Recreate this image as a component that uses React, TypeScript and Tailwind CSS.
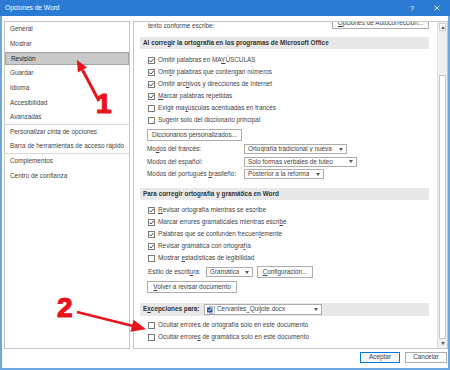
import React from "react";

const Check = ({ on }: { on?: boolean }) => (
  <span className="flex h-[7px] w-[7px] shrink-0 items-center justify-center border border-[#7a7a7a] bg-white">
    {on && (
      <svg width="5" height="5" viewBox="0 0 5 5">
        <path d="M0.4 2.5 L1.9 4 L4.6 0.9" fill="none" stroke="#333" strokeWidth="0.9" />
      </svg>
    )}
  </span>
);

const CheckRow = ({ on, children }: { on?: boolean; children: React.ReactNode }) => (
  <div className="flex h-[12px] items-center gap-[3px] pl-[14px]">
    <Check on={on} />
    <span className="whitespace-nowrap">{children}</span>
  </div>
);

const Caret = () => (
  <svg width="4" height="3" viewBox="0 0 4 3" className="shrink-0">
    <path d="M0 0H4L2 3Z" fill="#555" />
  </svg>
);

const Drop = ({ className, children }: { className: string; children: React.ReactNode }) => (
  <div className={`flex h-[10px] items-center justify-between border border-[#acacac] bg-white px-[3px] ${className}`}>
    <span className="truncate">{children}</span>
    <Caret />
  </div>
);

const Btn = ({ className, children }: { className: string; children: React.ReactNode }) => (
  <div className={`flex h-[12px] shrink-0 items-center justify-center border border-[#adadad] bg-[#fdfdfd] whitespace-nowrap ${className}`}>
    {children}
  </div>
);

const Header = ({ className, children }: { className: string; children: React.ReactNode }) => (
  <div className={`ml-[6px] mr-[8px] flex items-center bg-[#e8e8e8] pl-[3px] font-bold text-[#333] whitespace-nowrap ${className}`}>
    {children}
  </div>
);

const WordIcon = () => (
  <svg width="8" height="8" viewBox="0 0 8 8" className="shrink-0">
    <rect x="2.5" y="0.5" width="5" height="7" fill="#fff" stroke="#7f8fa8" strokeWidth="0.6" />
    <rect x="0" y="1.5" width="5.5" height="5" fill="#2b5797" />
    <path d="M1 3.5 L2.4 5 L4.6 2.4" fill="none" stroke="#fff" strokeWidth="0.9" />
  </svg>
);

const nav: { label: string; sel?: boolean; sep?: boolean }[] = [
  { label: "General" },
  { label: "Mostrar" },
  { label: "Revisión", sel: true },
  { label: "Guardar" },
  { label: "Idioma" },
  { label: "Accesibilidad" },
  { label: "Avanzadas", sep: true },
  { label: "Personalizar cinta de opciones" },
  { label: "Barra de herramientas de acceso rápido", sep: true },
  { label: "Complementos" },
  { label: "Centro de confianza" },
];

export default function App() {
  return (
    <div className="relative flex h-[370px] w-[450px] flex-col overflow-hidden bg-white font-['Liberation_Sans',Arial,sans-serif] text-[6.4px] leading-none text-[#444]">
      {/* title bar */}
      <div className="flex h-[16px] shrink-0 items-center bg-[#2b7bd5] text-white">
        <span className="flex-1 pl-[5px] text-[6.6px]">Opciones de Word</span>
        <span className="flex w-[24px] justify-center text-[7px]">?</span>
        <span className="flex w-[26px] justify-center">
          <svg width="6" height="6" viewBox="0 0 6 6">
            <path d="M0.5 0.5 L5.5 5.5 M5.5 0.5 L0.5 5.5" stroke="#fff" strokeWidth="0.9" />
          </svg>
        </span>
      </div>

      <div className="flex flex-1 flex-col border-x-2 border-b-2 border-[#6ea6e4] pt-[5px]">
        <div className="flex h-[328px] gap-[3px] pl-[2px]">
          {/* sidebar */}
          <div className="flex w-[126px] flex-col border border-[#c6c6c6]">
            {nav.map((n) => (
              <div
                key={n.label}
                className={`flex h-[14.7px] shrink-0 items-center ${n.sep ? "border-b border-[#d9d9d9]" : ""}`}
              >
                <div
                  className={`flex h-[12.5px] w-full items-center pl-[5px] whitespace-nowrap ${
                    n.sel ? "border border-[#a3a3a3] bg-[#c9c9c9] pl-[4px] text-[#222]" : ""
                  }`}
                >
                  {n.label}
                </div>
              </div>
            ))}
          </div>

          {/* main panel, scrolled a little */}
          <div className="flex w-[315px] border border-[#c6c6c6]">
            <div className="flex flex-1 flex-col overflow-hidden">
              <div className="-mt-[14px] flex h-[24px] shrink-0 items-end justify-between pl-[14px] pr-[8px]">
                <div className="flex flex-col">
                  <span className="h-[12px]" />
                  <span className="flex h-[12px] items-center whitespace-nowrap">texto conforme escribe:</span>
                </div>
                <Btn className="mb-[3px] w-[97px]">
                  <span><u>O</u>pciones de Autocorrección...</span>
                </Btn>
              </div>

              <Header className="mt-[5px] h-[12px]">Al corregir la ortografía en los programas de Microsoft Office</Header>
              <div className="mt-[5px] flex flex-col">
                <CheckRow on>Omitir palabras en MA<u>Y</u>ÚSCULAS</CheckRow>
                <CheckRow on>Omi<u>t</u>ir palabras que contengan números</CheckRow>
                <CheckRow on>Omitir arc<u>h</u>ivos y direcciones de Internet</CheckRow>
                <CheckRow on><u>M</u>arcar palabras repetidas</CheckRow>
                <CheckRow>Exigir ma<u>y</u>úsculas acentuadas en francés</CheckRow>
                <CheckRow>Sugerir solo del diccionario principal</CheckRow>
              </div>
              <div className="mt-[3px] pl-[13px]">
                <Btn className="w-[95px]">Diccionarios personalizados...</Btn>
              </div>
              <div className="mt-[2px] flex flex-col pl-[13px]">
                <div className="flex h-[12.5px] items-center">
                  <span className="w-[97px] whitespace-nowrap">Mo<u>d</u>os del francés:</span>
                  <Drop className="w-[103px]">Ortografía tradicional y nueva</Drop>
                </div>
                <div className="flex h-[12.5px] items-center">
                  <span className="w-[97px] whitespace-nowrap">Modos del español:</span>
                  <Drop className="w-[113px]">Solo formas verbales de tuteo</Drop>
                </div>
                <div className="flex h-[12.5px] items-center">
                  <span className="w-[97px] whitespace-nowrap">Modos del portugués <u>b</u>rasileño:</span>
                  <Drop className="w-[80px]">Posterior a la reforma</Drop>
                </div>
              </div>

              <Header className="mt-[7.5px] h-[12px]">Para corregir ortografía y gramática en Word</Header>
              <div className="mt-[4px] flex flex-col">
                <CheckRow on><u>R</u>evisar ortografía mientras se escribe</CheckRow>
                <CheckRow on>Marcar errores gramaticales mientras escri<u>b</u>e</CheckRow>
                <CheckRow on>Palabras que se confunden frecuen<u>t</u>emente</CheckRow>
                <CheckRow on>Revisar gramática con ortogra<u>f</u>ía</CheckRow>
                <CheckRow>Mostrar <u>e</u>stadísticas de legibilidad</CheckRow>
              </div>
              <div className="mt-[2px] flex h-[12px] items-center pl-[14px]">
                <span className="w-[58px] whitespace-nowrap">Estilo de escrit<u>u</u>ra:</span>
                <Drop className="w-[47px]">Gramática</Drop>
                <Btn className="ml-[4px] w-[56px]"><span><u>C</u>onfiguración...</span></Btn>
              </div>
              <div className="mt-[3px] pl-[13px]">
                <Btn className="w-[90px]"><span><u>V</u>olver a revisar documento</span></Btn>
              </div>

              <Header className="mt-[10px] h-[13px]">
                <span className="w-[61px]">E<u>x</u>cepciones para:</span>
                <div className="flex h-[11px] w-[118px] items-center justify-between border border-[#acacac] bg-white pl-[2px] pr-[3px] font-normal text-[#444]">
                  <span className="flex items-center gap-[2px]">
                    <WordIcon />
                    Cervantes_Quijote.docx
                  </span>
                  <Caret />
                </div>
              </Header>
              <div className="mt-[3px] flex flex-col">
                <CheckRow>Ocultar errores de ortografía solo en este documento</CheckRow>
                <CheckRow>Ocultar errore<u>s</u> de gramática solo en este documento</CheckRow>
              </div>
            </div>

            {/* scrollbar */}
            <div className="flex w-[10px] flex-col border-l border-[#e2e2e2] bg-[#efefef]">
              <div className="mx-[1px] mt-[1px] flex h-[8px] items-center justify-center border border-[#cfcfcf] bg-white">
                <svg width="4" height="3" viewBox="0 0 4 3"><path d="M0 3H4L2 0Z" fill="#606060" /></svg>
              </div>
              <div className="h-[44px]" />
              <div className="mx-[1px] flex-1 border border-[#c8c8c8] bg-white" />
              <div className="mx-[1px] mb-[1px] flex h-[8px] items-center justify-center">
                <svg width="4" height="3" viewBox="0 0 4 3"><path d="M0 0H4L2 3Z" fill="#606060" /></svg>
              </div>
            </div>
          </div>
        </div>

        <div className="mt-[3px] flex h-[11px] justify-end gap-[5px] pr-[1px]">
          <div className="flex w-[40px] items-center justify-center border border-[#0078d7] bg-[#f7f7f7]">Aceptar</div>
          <div className="flex w-[42px] items-center justify-center border border-[#adadad] bg-[#fdfdfd]">Cancelar</div>
        </div>
      </div>

      {/* annotations */}
      <svg className="pointer-events-none absolute inset-0" width="450" height="370" viewBox="0 0 450 370">
        <line x1="99" y1="101" x2="82.5" y2="70" stroke="#e8141c" strokeWidth="3" />
        <polygon points="77,60 87,67.5 77.8,72.5" fill="#e8141c" />
        <line x1="77" y1="312" x2="133" y2="326" stroke="#e8141c" strokeWidth="2.8" />
        <polygon points="146,329.3 130.4,331.8 133.6,319.8" fill="#e8141c" />
      </svg>
      <span className="pointer-events-none absolute left-[96px] top-[90px] text-[28px] font-bold leading-none text-[#e8141c] [-webkit-text-stroke:1.2px_#e8141c]">1</span>
      <span className="pointer-events-none absolute left-[57px] top-[294px] text-[28px] font-bold leading-none text-[#e8141c] [-webkit-text-stroke:1.2px_#e8141c]">2</span>
    </div>
  );
}
